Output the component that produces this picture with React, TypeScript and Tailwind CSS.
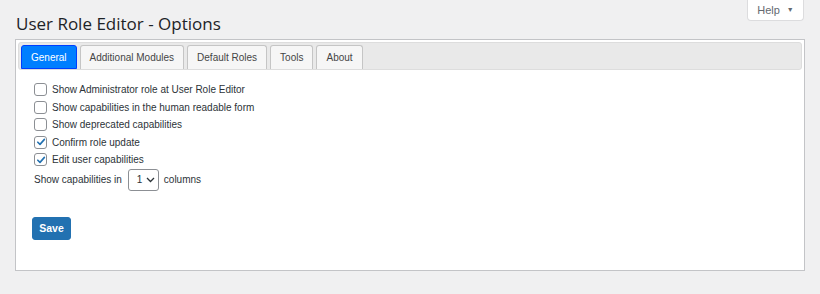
import { useState } from 'react';

const tabs = ['General', 'Additional Modules', 'Default Roles', 'Tools', 'About'];

const options = [
    { label: 'Show Administrator role at User Role Editor', checked: false },
    { label: 'Show capabilities in the human readable form', checked: false },
    { label: 'Show deprecated capabilities', checked: false },
    { label: 'Confirm role update', checked: true },
    { label: 'Edit user capabilities', checked: true },
];

function Checkbox({ checked }: { checked: boolean }) {
    return (
        <span className="w-[13px] h-[13px] rounded-[3px] border border-[#8c8f94] bg-white flex items-center justify-center shrink-0">
            {checked && (
                <svg width="10" height="10" viewBox="0 0 10 10" fill="none">
                    <path d="M1.8 5.2 L4 7.4 L8.4 2.4" stroke="#2271b1" strokeWidth="1.6" strokeLinecap="round" strokeLinejoin="round" />
                </svg>
            )}
        </span>
    );
}

export default function App() {
    const [active, setActive] = useState(0);

    return (
        <div className="w-[820px] h-[294px] bg-[#f0f0f1] text-[#2c3338] font-['Liberation_Sans',Arial,sans-serif] overflow-hidden">
            {/* Header */}
            <div className="flex justify-between items-start pl-[16px] pr-[16px]">
                <h1 className="pt-[12px] text-[17px] leading-[24px] text-[#1d2327] font-['Open_Sans',sans-serif]">
                    User Role Editor - Options
                </h1>
                <button className="w-[57px] h-[21px] bg-white border border-t-0 border-[#dcdcde] rounded-b-[4px] flex items-center justify-center gap-[7px] text-[11px] text-[#646970]">
                    <span>Help</span>
                    <span className="text-[7px]">▼</span>
                </button>
            </div>

            {/* Panel */}
            <div className="ml-[15px] mt-[3px] w-[790px] h-[232px] bg-white border border-[#c3c4c7] p-[2px] flex flex-col">
                <div className="h-[28px] bg-[#e9e9e9] border border-[#dddddd] rounded-[3px] flex items-end gap-[3px] pl-[2px]">
                    {tabs.map((t, i) => (
                        <button
                            key={t}
                            onClick={() => setActive(i)}
                            className={
                                i === active
                                    ? 'h-[24px] px-[9px] text-[10px] border border-[#003eff] bg-[#007fff] text-white rounded-t-[3px]'
                                    : 'h-[24px] px-[9px] text-[10px] border border-[#c5c5c5] border-b-0 bg-[#f6f6f6] text-[#454545] rounded-t-[3px]'
                            }
                        >
                            {t}
                        </button>
                    ))}
                </div>

                <div className="pl-[16px] pt-[11px] flex flex-col">
                    {options.map((o) => (
                        <label key={o.label} className="h-[17.5px] flex items-center gap-[5px] text-[10px]">
                            <Checkbox checked={o.checked} />
                            <span>{o.label}</span>
                        </label>
                    ))}
                    <div className="flex items-center text-[10px]">
                        <span>Show capabilities in</span>
                        <span className="ml-[6px] w-[31px] h-[22px] border border-[#8c8f94] rounded-[3px] flex items-center pl-[8px] gap-[4px]">
                            <span>1</span>
                            <svg width="9" height="6" viewBox="0 0 9 6" fill="none">
                                <path d="M1 1 L4.5 4.5 L8 1" stroke="#2c3338" strokeWidth="1.3" />
                            </svg>
                        </span>
                        <span className="ml-[5px]">columns</span>
                    </div>
                    <div className="mt-[24px] -ml-[2px]">
                        <button className="w-[39px] h-[23px] bg-[#2271b1] border border-[#2271b1] rounded-[3px] text-white text-[10.5px] font-semibold">
                            Save
                        </button>
                    </div>
                </div>
            </div>
        </div>
    );
}
